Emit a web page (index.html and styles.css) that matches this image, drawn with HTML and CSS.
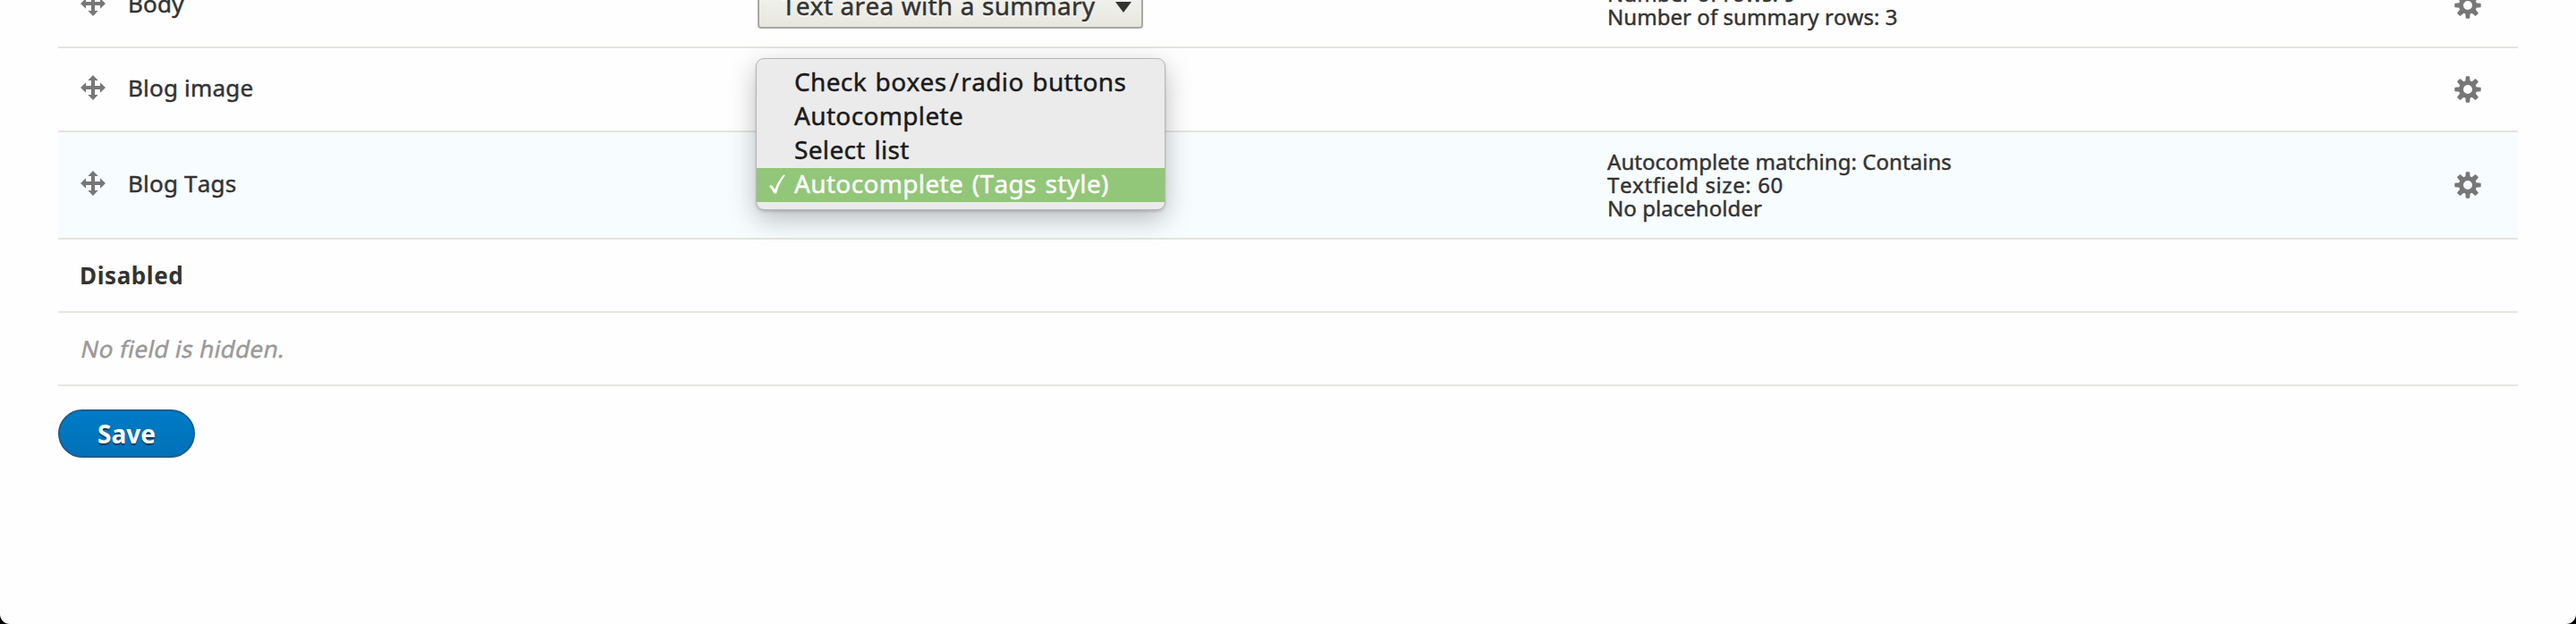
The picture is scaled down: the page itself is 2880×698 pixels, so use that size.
FILE: index.html
```html
<!DOCTYPE html>
<html lang="en">
<head>
<meta charset="utf-8">
<title>Manage form display</title>
<link rel="stylesheet" href="styles.css">
</head>
<body>
<svg class="defs" width="0" height="0" aria-hidden="true">
  <symbol id="move" viewBox="0 0 28 28">
    <path d="M14 0 19.7 6H16V12H22V8.3L28 14 22 19.7V16H16V22H19.7L14 28 8.3 22H12V16H6V19.7L0 14 6 8.3V12H12V6H8.3Z"/>
  </symbol>
  <symbol id="gear" viewBox="-15 -15 30 30">
    <g id="teeth">
      <path d="M-2.7-9-2.2-14Q-2.1-14.7-1.4-14.7H1.4Q2.1-14.7 2.2-14L2.7-9ZM-2.7 9-2.2 14Q-2.1 14.7-1.4 14.7H1.4Q2.1 14.7 2.2 14L2.7 9ZM-9-2.7-14-2.2Q-14.7-2.1-14.7-1.4V1.4Q-14.7 2.1-14 2.2L-9 2.7ZM9-2.7 14-2.2Q14.7-2.1 14.7-1.4V1.4Q14.7 2.1 14 2.2L9 2.7Z"/>
      <path transform="rotate(45)" d="M-3.1-8-2.5-14Q-2.4-14.7-1.7-14.7H1.7Q2.4-14.7 2.5-14L3.1-8ZM-3.1 8-2.5 14Q-2.4 14.7-1.7 14.7H1.7Q2.4 14.7 2.5 14L3.1 8ZM-8-3.1-14-2.5Q-14.7-2.4-14.7-1.7V1.7Q-14.7 2.4-14 2.5L-8 3.1ZM8-3.1 14-2.5Q14.7-2.4 14.7-1.7V1.7Q14.7 2.4 14 2.5L8 3.1Z"/>
    </g>
    <path fill-rule="evenodd" d="M0-10A10 10 0 0 1 0 10 10 10 0 0 1 0-10ZM0-5A5 5 0 0 0 0 5 5 5 0 0 0 0-5Z"/>
  </symbol>
</svg>
<main class="page">
  <div class="table">
    <div class="row">
      <div class="field"><svg class="handle"><use href="#move"/></svg><span>Body</span></div>
      <div class="widget"><div class="select"><span>Text area with a summary</span><svg class="arrow" viewBox="0 0 18 12"><path d="M0 0H18L9 12Z"/></svg></div></div>
      <div class="summary"><div>Number of rows: 9</div><div>Number of summary rows: 3</div></div>
      <svg class="gear"><use href="#gear"/></svg>
    </div>
    <div class="row">
      <div class="field"><svg class="handle"><use href="#move"/></svg><span>Blog image</span></div>
      <div class="widget">
        <div class="menu">
          <div class="option">Check boxes<span class="slash">/</span>radio buttons</div>
          <div class="option">Autocomplete</div>
          <div class="option">Select list</div>
          <div class="option selected"><svg class="check" viewBox="0 0 20 22"><path d="M1 13.5Q3.2 11.2 5 13.5L7.3 17Q10.5 7.5 17 .8H19Q12 10 9 21.5H6.5Q4.5 17 1 13.5Z"/></svg>Autocomplete (Tags style)</div>
        </div>
      </div>
      <div class="summary"></div>
      <svg class="gear"><use href="#gear"/></svg>
    </div>
    <div class="row tall active">
      <div class="field"><svg class="handle"><use href="#move"/></svg><span>Blog Tags</span></div>
      <div class="widget"></div>
      <div class="summary"><div>Autocomplete matching: Contains</div><div class="wide">Textfield size: 60</div><div>No placeholder</div></div>
      <svg class="gear"><use href="#gear"/></svg>
    </div>
    <div class="region title">Disabled</div>
    <div class="region empty"><span class="oblique">No field is hidden.</span></div>
  </div>
  <button class="save">Save</button>
</main>
</body>
</html>
```
FILE: styles.css
```css
* { box-sizing: border-box; }
html { background: #000; }
body {
  margin: 0;
  height: 698px;
  overflow: hidden;
  background: #000;
  color: #333;
  font: 26px/36px "Noto Sans", "Open Sans", sans-serif;
  font-kerning: none;
  -webkit-text-stroke: .45px currentColor;
}
.defs { position: absolute; }
.page {
  height: 698px;
  padding: 0 65px;
  overflow: hidden;
  background: #fefefe;
  border-radius: 0 0 11px 11px;
}
.table { margin-top: -40px; }
.row {
  display: grid;
  grid-template-columns: 757px 950px 947px 30px;
  align-items: center;
  height: 94px;
  padding-left: 25px;
  border-bottom: 2px solid #e6e4df;
}
.tall { height: 120px; }
.active { background: #f7fcff; }
.field {
  display: flex;
  align-items: center;
  gap: 25px;
  padding-bottom: 4px;
  letter-spacing: .2px;
}
.handle { width: 28px; height: 28px; fill: #777; }
.gear { width: 30px; height: 30px; fill: #777; }
.widget { position: relative; align-self: stretch; display: flex; align-items: center; }
.summary { font-size: 24px; line-height: 26px; letter-spacing: .05px; }
.wide { letter-spacing: .6px; }
.select {
  display: flex;
  align-items: center;
  justify-content: space-between;
  width: 431px;
  height: 52px;
  padding: 0 11px 0 25px;
  border: 2px solid #a6a6a6;
  border-radius: 4px;
  background: linear-gradient(#f6f6f3, #e7e7df);
  font-size: 28px;
  letter-spacing: .25px;
  word-spacing: .8px;
  text-shadow: 0 2px rgba(255, 255, 255, .6);
  white-space: nowrap;
}
.arrow { width: 18px; height: 12px; margin-top: 4px; fill: #333; }
.menu {
  position: absolute;
  z-index: 1;
  top: 11px;
  left: -2px;
  width: 458px;
  height: 170px;
  padding: 8px 0;
  border: 1px solid #b7b7b7;
  border-radius: 9px;
  background: #ebebeb;
  box-shadow: 0 10px 30px rgba(0, 0, 0, .26), 0 2px 3px rgba(0, 0, 0, .15);
}
.option {
  position: relative;
  height: 38px;
  padding-left: 42px;
  color: #1a1a1a;
  font-size: 28px;
  line-height: 34px;
  letter-spacing: .35px;
  word-spacing: 2px;
  white-space: nowrap;
}
.slash { padding: 0 2px 0 3px; }
.selected { background: #92c679; color: #fff; }
.check { position: absolute; left: 13px; top: 7px; width: 20px; height: 22px; fill: #fff; }
.region {
  height: 82px;
  padding-left: 24px;
  border-bottom: 2px solid #e6e4df;
  line-height: 80px;
}
.title { font-weight: 700; letter-spacing: .6px; -webkit-text-stroke: 0; }
.empty { color: #999; letter-spacing: .4px; }
.oblique { display: inline-block; transform: skewX(-12deg); transform-origin: 0 50px; }
.save {
  display: block;
  width: 153px;
  height: 54px;
  margin-top: 26px;
  padding: 0;
  border: 2px solid #1e5c90;
  border-radius: 27px;
  background: linear-gradient(#007bc6, #0071b8);
  color: #fff;
  font: 700 28px/50px "Noto Sans", "Open Sans", sans-serif;
  text-shadow: 0 2px rgba(0, 0, 0, .5);
  -webkit-text-stroke: 0;
}
```
